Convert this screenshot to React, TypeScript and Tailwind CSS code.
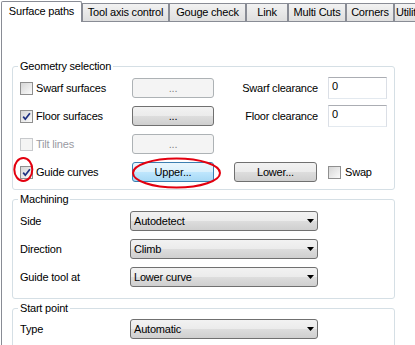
import type { ReactNode } from 'react'

type Tab = {
  label: string
  width: string
}

const tabs: Tab[] = [
  { label: 'Tool axis control', width: 'w-[87px]' },
  { label: 'Gouge check', width: 'w-[77px]' },
  { label: 'Link', width: 'w-[42px]' },
  { label: 'Multi Cuts', width: 'w-[58px]' },
  { label: 'Corners', width: 'w-[48px]' },
]

const buttonBase = 'h-[20px] rounded-[3px] border flex items-center leading-[13px]'
const buttonNormal =
  'border-[#707070] bg-[linear-gradient(#f2f2f2_0%,#ebebeb_50%,#dddddd_51%,#cfcfcf_100%)] text-black'
const buttonDisabled = 'border-[#adb2b5] bg-[#f4f4f4] text-[#838383]'
const buttonHot =
  'border-[#3c7fb1] bg-[linear-gradient(#eaf6fd_0%,#d9f0fc_50%,#bee6fd_51%,#a7d9f5_100%)] text-black'

function Check({ checked = false, disabled = false }: { checked?: boolean; disabled?: boolean }) {
  return (
    <span
      className={
        disabled
          ? 'w-[13px] h-[13px] shrink-0 border border-[#c7c9cc] bg-[#f4f4f4] flex items-center justify-center'
          : 'w-[13px] h-[13px] shrink-0 border border-[#8f8f8f] bg-[linear-gradient(135deg,#d6d6d6,#fbfbfb)] flex items-center justify-center'
      }
    >
      {checked && (
        <svg width="11" height="11" viewBox="0 0 11 11">
          <path d="M2.2 5.6 L4.3 8.2 L8.9 2.2" fill="none" stroke="#1d2f80" strokeWidth="1.7" />
        </svg>
      )}
    </span>
  )
}

function Group({ title, children, className }: { title: string; children: ReactNode; className: string }) {
  return (
    <fieldset className={`w-[383px] border border-[#d5dfe5] rounded-[3px] pl-[7px] ${className}`}>
      <legend className="-ml-[2px] px-[2px] leading-[13px]">{title}</legend>
      {children}
    </fieldset>
  )
}

function Select({ value }: { value: string }) {
  return (
    <div className={`${buttonBase} ${buttonNormal} w-[188px] justify-between pl-[3px] pr-[3px]`}>
      <span>{value}</span>
      <svg width="7" height="4" viewBox="0 0 7 4">
        <polygon points="0,0 7,0 3.5,4" fill="#000" />
      </svg>
    </div>
  )
}

function Input({ value }: { value: string }) {
  return (
    <div className="w-[59px] h-[22px] -my-px border border-[#abadb3] border-l-[#dbdfe6] border-r-[#dbdfe6] border-b-[#e3e9ef] bg-white pl-[3px] pt-[2px] leading-[13px]">
      {value}
    </div>
  )
}

export default function App() {
  return (
    <div className="relative w-[415px] h-[345px] overflow-hidden bg-white text-[11px] text-black font-['Liberation_Sans',Arial,sans-serif] tracking-[-0.2px] flex flex-col">
      {/* tab strip */}
      <div className="flex items-end h-[22px] pl-[1px] shrink-0">
        <div className="relative z-10 w-[81px] h-[21px] shrink-0 bg-white border border-b-0 border-[#898c95] rounded-t-[2px] flex items-center justify-center pb-[1px] whitespace-nowrap">
          Surface paths
        </div>
        {tabs.map((tab) => (
          <div
            key={tab.label}
            className={`${tab.width} h-[19px] shrink-0 border border-[#898c95] bg-[linear-gradient(#f2f2f2,#dfdfdf)] flex items-center justify-center whitespace-nowrap`}
          >
            {tab.label}
          </div>
        ))}
        <div className="w-[60px] h-[19px] shrink-0 border border-[#898c95] bg-[linear-gradient(#f2f2f2,#dfdfdf)] flex items-center pl-[1px] whitespace-nowrap">
          Utilities
        </div>
      </div>

      {/* page */}
      <div className="-mt-px ml-[1px] flex-1 border-l border-t border-[#898c95] bg-white pl-[10px] pt-[38px]">
        <Group title="Geometry selection" className="pt-[5px] pb-[7px]">
          <div className="grid grid-cols-[112px_82px_114px_59px] auto-rows-[20px] gap-y-[8px] items-center">
            <label className="flex items-center gap-[3px]">
              <Check />
              <span>Swarf surfaces</span>
            </label>
            <div className={`${buttonBase} ${buttonDisabled} justify-center`}>...</div>
            <div className="text-right pr-[10px]">Swarf clearance</div>
            <Input value="0" />

            <label className="flex items-center gap-[3px]">
              <Check checked />
              <span>Floor surfaces</span>
            </label>
            <div className={`${buttonBase} ${buttonNormal} justify-center`}>...</div>
            <div className="text-right pr-[10px]">Floor clearance</div>
            <Input value="0" />

            <label className="flex items-center gap-[3px] text-[#9a9aa2]">
              <Check disabled />
              <span>Tilt lines</span>
            </label>
            <div className={`${buttonBase} ${buttonDisabled} justify-center`}>...</div>
            <div />
            <div />

            <label className="flex items-center gap-[3px]">
              <Check checked />
              <span>Guide curves</span>
            </label>
            <div className={`${buttonBase} ${buttonHot} justify-center`}>Upper...</div>
            <div className="pl-[20px]">
              <div className={`${buttonBase} ${buttonNormal} justify-center w-[83px]`}>Lower...</div>
            </div>
            <label className="flex items-center gap-[4px]">
              <Check />
              <span>Swap</span>
            </label>
          </div>
        </Group>

        <Group title="Machining" className="mt-[3px] pt-[5px] pb-[11px]">
          <div className="grid grid-cols-[110px_188px] auto-rows-[20px] gap-y-[8px] items-center">
            <span>Side</span>
            <Select value="Autodetect" />
            <span>Direction</span>
            <Select value="Climb" />
            <span>Guide tool at</span>
            <Select value="Lower curve" />
          </div>
        </Group>

        <Group title="Start point" className="mt-[3px] pt-[4px] pb-[11px]">
          <div className="grid grid-cols-[110px_188px] auto-rows-[20px] gap-y-[8px] items-center">
            <span>Type</span>
            <Select value="Automatic" />
          </div>
        </Group>
      </div>

      {/* red annotation marks */}
      <svg className="absolute inset-0 pointer-events-none" width="415" height="345" viewBox="0 0 415 345">
        <ellipse cx="23.3" cy="169.5" rx="9" ry="11.5" fill="none" stroke="#e3000f" strokeWidth="2" />
        <ellipse cx="176.5" cy="173" rx="43.5" ry="14.5" fill="none" stroke="#e3000f" strokeWidth="2" />
      </svg>
    </div>
  )
}
